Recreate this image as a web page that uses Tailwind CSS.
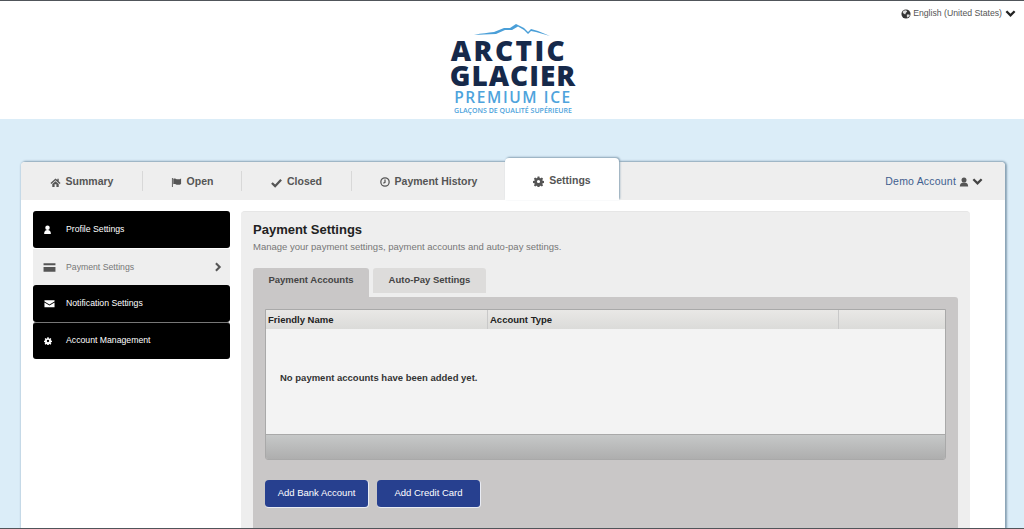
<!DOCTYPE html>
<html lang="en">
<head>
  <meta charset="utf-8" />
  <title>Arctic Glacier - Settings</title>
  <script src="https://cdn.jsdelivr.net/npm/@tailwindcss/browser@4"></script>
</head>
<body class="font-['Liberation_Sans',Arial,sans-serif]">
  <div class="h-[529px] overflow-hidden flex flex-col bg-[#dbedf8] border-t border-b border-[#50555a]">

    <!-- Header with logo and language picker -->
    <header class="relative h-[118px] shrink-0 bg-white">
      <div class="absolute right-[8px] top-[6px] flex items-center gap-[2px] text-[8.7px] text-[#555]">
        <svg class="w-[10px] h-[10px]" viewBox="0 0 24 24"><circle cx="12" cy="12" r="11" fill="#333"/><path d="M6 4l6-1 3 3-3 3-2 4-4-2-2-3zM14 13l6 0 1 3-5 5-2-3z" fill="#ddd"/></svg>
        <span>English (United States)</span>
        <svg class="w-[11px] h-[11px] ml-[1px]" viewBox="0 0 24 24" fill="none" stroke="#222" stroke-width="5"><path d="M3 7l9 9 9-9"/></svg>
      </div>
      <div class="flex flex-col items-center pt-[22px] ml-[2px]">
        <svg class="mr-[2px] w-[76px] h-[15px]" viewBox="0 0 76 15" fill="#4a9fd8"><path d="M0 12C8 10 14 10 20 9L30 5 36 5 42 1 46 3 50 5 54 9 57 6 64 8 76 13 62 9 57 8 54 11 50 7 44 3.500 38 7 31 7 22 11 10 11.500Z"/></svg>
        <div class="flex flex-col items-center font-['Open_Sans',sans-serif] font-extrabold text-[#16294a]">
          <span class="mr-[8px] text-[28px] leading-[25px] tracking-[2.4px]">ARCTIC</span>
          <span class="text-[28px] leading-[25px] tracking-[1px]">GLACIER</span>
        </div>
        <span class="mt-[2px] text-[15.5px] leading-[15px] font-['Open_Sans',sans-serif] font-semibold text-[#4ea3dc] tracking-[1.6px]">PREMIUM ICE</span>
        <span class="mt-[2px] text-[7px] leading-[8px] font-['Open_Sans',sans-serif] font-semibold text-[#4ea3dc]">GLAÇONS DE QUALITÉ SUPÉRIEURE</span>
      </div>
    </header>

    <!-- Main card -->
    <div class="ml-[21px] mr-[19px] mt-[43px] flex-1 min-h-0 flex flex-col bg-white rounded-t-[4px] shadow-[1px_0_2px_1px_#8aa3b5]">
      <!-- Tab bar -->
      <nav class="h-[38px] shrink-0 flex items-center bg-[#eeeeee] rounded-t-[4px] text-[10.5px] font-bold text-[#555]">
        <a class="w-[122px] h-[20px] pt-[2px] flex items-center justify-center gap-[5px] border-r border-[#d8d8d8]">
          <svg class="w-[11px] h-[11px]" viewBox="0 0 24 24" fill="#555"><path d="M12 3L1 13l2 2 9-8 9 8 2-2-4-3.6V4h-3v2.700zM5 15.500V22h5v-6h4v6h5v-6.500l-7-6.200z"/></svg>
          <span>Summary</span>
        </a>
        <a class="w-[99px] h-[20px] pt-[2px] flex items-center justify-center gap-[5px] border-r border-[#d8d8d8]">
          <svg class="w-[11px] h-[11px]" viewBox="0 0 24 24" fill="#555"><path d="M2 2h2v20H2zM5 4c4-2 7 2 11 1 2 0 4-1 6-2v12c-2 1-4 2-6 2-4 1-7-3-11-1z"/></svg>
          <span>Open</span>
        </a>
        <a class="w-[110px] h-[20px] pt-[2px] flex items-center justify-center gap-[5px] border-r border-[#d8d8d8]">
          <svg class="w-[11px] h-[11px]" viewBox="0 0 24 24" fill="none" stroke="#555" stroke-width="5"><path d="M2 13l7 7L22 6"/></svg>
          <span>Closed</span>
        </a>
        <a class="w-[153px] pt-[2px] flex items-center justify-center gap-[5px]">
          <svg class="w-[10px] h-[10px]" viewBox="0 0 24 24" fill="none" stroke="#555" stroke-width="3"><circle cx="12" cy="12" r="10"/><path d="M12 6v7l-4 2"/></svg>
          <span>Payment History</span>
        </a>
        <a class="relative -top-[2px] w-[114px] h-[42px] pt-[4px] flex items-center justify-center gap-[5px] bg-white rounded-t-[4px] shadow-[1px_-1px_2px_#8aa3b5]">
          <svg class="w-[11px] h-[11px]" viewBox="0 0 24 24"><path fill="#555" fill-rule="evenodd" d="M10 1h4l.6 3.200 2 .8 2.700-1.900 2.800 2.800-1.900 2.700.8 2 3 .4v4l-3 .6-.8 2 1.900 2.700-2.800 2.800-2.700-1.900-2 .8-.6 3h-4l-.6-3-2-.8-2.700 1.900-2.800-2.800 1.900-2.700-.8-2-3-.6v-4l3-.4.8-2-1.900-2.700 2.800-2.800 2.700 1.900 2-.8zM12 8.500a3.500 3.500 0 100 7 3.500 3.500 0 000-7z"/></svg>
          <span>Settings</span>
        </a>
        <div class="ml-auto mr-[22px] pt-[1px] flex items-center gap-[3px] text-[10.5px] font-normal tracking-[0.2px]">
          <span class="text-[#3f5f8f]">Demo Account</span>
          <svg class="w-[10px] h-[10px]" viewBox="0 0 24 24" fill="#555"><circle cx="12" cy="7" r="6"/><path d="M2 23c0-7 3-10 10-10s10 3 10 10z"/></svg>
          <svg class="w-[11px] h-[11px]" viewBox="0 0 24 24" fill="none" stroke="#444" stroke-width="5"><path d="M3 7l9 9 9-9"/></svg>
        </div>
      </nav>

      <div class="flex-1 min-h-0 flex items-start pl-[12px] pt-[11px]">
        <!-- Side menu -->
        <aside class="w-[197px] shrink-0 text-[8.7px]">
          <a class="h-[37px] flex items-center bg-black text-white rounded-[3px]">
            <svg class="ml-[10px] w-[9px] h-[9px]" viewBox="0 0 24 24" fill="#fff"><circle cx="12" cy="7" r="6"/><path d="M3 24c0-8 3-11 9-11s9 3 9 11z"/></svg>
            <span class="ml-[14px]">Profile Settings</span>
          </a>
          <a class="h-[36px] mt-[1px] pt-[1px] flex items-center bg-[#eeeeee] text-[#777]">
            <svg class="ml-[10px] w-[13px] h-[13px]" viewBox="0 0 24 24" fill="#555"><path d="M1 4h22v4H1zM1 11h22v9H1z"/></svg>
            <span class="ml-[10px]">Payment Settings</span>
            <svg class="ml-auto mr-[7px] w-[10px] h-[10px] -mt-[2px]" viewBox="0 0 24 24" fill="none" stroke="#555" stroke-width="5"><path d="M7 3l9 9-9 9"/></svg>
          </a>
          <a class="h-[37px] flex items-center bg-black text-white rounded-[3px]">
            <svg class="ml-[11px] w-[11px] h-[11px]" viewBox="0 0 24 24"><path fill="#fff" d="M1 5h22v2.500L12 14 1 7.500zM1 10l11 6.500L23 10v10H1z"/></svg>
            <span class="ml-[11px]">Notification Settings</span>
          </a>
          <a class="h-[37px] flex items-center bg-black text-white rounded-[3px] border-t border-[#777]">
            <svg class="ml-[11px] w-[8px] h-[8px]" viewBox="0 0 24 24"><path fill="#fff" fill-rule="evenodd" d="M10 1h4l.6 3.200 2 .8 2.700-1.900 2.800 2.800-1.900 2.700.8 2 3 .4v4l-3 .6-.8 2 1.900 2.700-2.800 2.800-2.700-1.900-2 .8-.6 3h-4l-.6-3-2-.8-2.700 1.900-2.800-2.800 1.900-2.700-.8-2-3-.6v-4l3-.4.8-2-1.900-2.700 2.800-2.800 2.700 1.900 2-.8zM12 8.500a3.500 3.500 0 100 7 3.500 3.500 0 000-7z"/></svg>
            <span class="ml-[14px]">Account Management</span>
          </a>
        </aside>

        <!-- Payment settings panel -->
        <main class="ml-[11px] w-[729px] h-[400px] shrink-0 bg-[#eeeeee] rounded-t-[4px] px-[12px] pt-[10px] border-t border-[#e6e6e6]">
          <h2 class="text-[13px] leading-[16px] font-bold text-[#222]">Payment Settings</h2>
          <p class="mt-[2px] text-[9.5px] leading-[14px] text-[#777]">Manage your payment settings, payment accounts and auto-pay settings.</p>

          <div class="mt-[14px] flex items-start gap-[4px] text-[9.5px] font-bold text-[#444]">
            <div class="w-[116px] h-[29px] pb-[4px] flex items-center justify-center bg-[#c9c7c7] rounded-t-[3px]">Payment Accounts</div>
            <div class="w-[113px] h-[25px] flex items-center justify-center bg-[#dddcdb] rounded-t-[3px]">Auto-Pay Settings</div>
          </div>

          <div class="h-[300px] bg-[#c9c7c7] rounded-tr-[3px] px-[12px] pt-[12px]">
            <div class="border border-[#a9a9a9] rounded-b-[3px] overflow-hidden">
              <div class="h-[19px] grid grid-cols-[222px_351px_1fr] bg-gradient-to-b from-[#e9e8e6] to-[#dbdbd9] text-[9.5px] font-bold text-[#222] leading-[19px]">
                <div class="pl-[2px] border-r border-[#c9c9c9]">Friendly Name</div>
                <div class="pl-[2px] border-r border-[#c9c9c9]">Account Type</div>
                <div></div>
              </div>
              <div class="h-[105px] flex items-center pl-[14px] pb-[7px] bg-[#f3f3f3] text-[9.5px] font-bold text-[#333]">No payment accounts have been added yet.</div>
              <div class="h-[25px] bg-gradient-to-b from-[#c6c8c8] to-[#aeaeae] border-t border-[#a9a9a9]"></div>
            </div>
            <div class="mt-[20px] flex gap-[8px] text-[9.5px] text-white">
              <button class="w-[104px] h-[28px] pb-[1px] rounded-[4px] bg-[#27408f] border-r border-b border-white/90">Add Bank Account</button>
              <button class="w-[104px] h-[28px] pb-[1px] rounded-[4px] bg-[#27408f] border-r border-b border-white/90">Add Credit Card</button>
            </div>
          </div>
        </main>
      </div>
    </div>
  </div>
</body>
</html>
